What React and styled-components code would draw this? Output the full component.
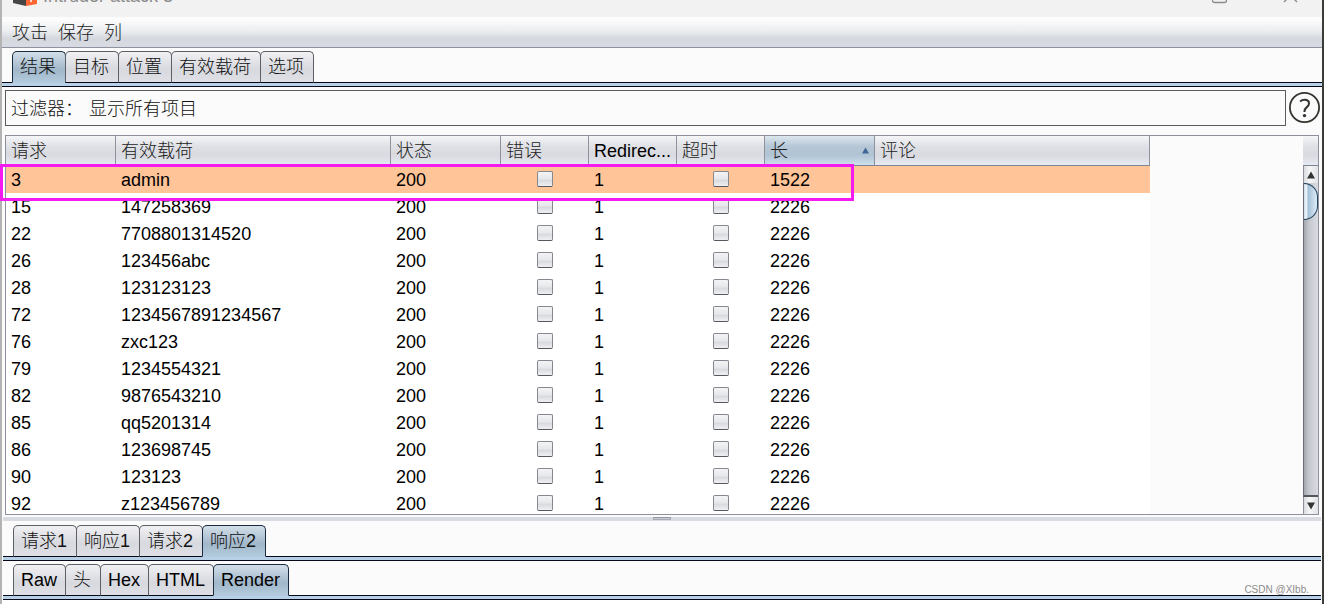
import React from 'react';
import styled, { createGlobalStyle } from 'styled-components';

const Global = createGlobalStyle`
  * { box-sizing: border-box; }
  body {
    margin: 0;
    overflow: hidden;
    background: #fbfbfb;
    color: #000;
    font: 18px/26px "Liberation Sans", "Noto Sans CJK SC", sans-serif;
  }
  button { font: inherit; color: inherit; }
`;

const Window = styled.div`
  display: flex;
  flex-direction: column;
  height: 100vh;
  border-left: 2px solid #b3b3b3;
  border-right: 2px solid #3b3b38;
`;

const TitleBar = styled.header`
  display: flex;
  align-items: flex-end;
  justify-content: space-between;
  flex: none;
  height: 17px;
  padding: 0 24px 0 11px;
  background: #f2f2f2;
  overflow: hidden;
`;

const TitleGroup = styled.div`
  display: flex;
  align-items: center;
  gap: ${(p) => p.$gap};
  height: 42px;
  color: #8c8c8c;
  white-space: nowrap;
`;

const MenuBar = styled.nav`
  display: flex;
  align-items: center;
  gap: 10px;
  flex: none;
  height: 31px;
  padding: 2px 10px 0;
  background: linear-gradient(#fcfcfc 10%, #eceef1 45%, #d5d8de 72%, #d8dbe1);
  border-bottom: 1px solid #9092a1;
`;

const MenuItem = styled.button`
  padding: 0;
  border: 0;
  background: none;
  color: #222;
  font-weight: 300;
`;

const TabPanel = styled.div`
  flex: none;
  padding-top: 3px;
  margin: ${(p) => (p.$inset ? '0 1px' : '0')};
`;

const TabList = styled.div`
  display: flex;
  position: relative;
  padding-left: 10px;
`;

const Tab = styled.button`
  height: 32px;
  margin: 0 -1px -1px 0;
  padding: ${(p) => (p.$latin ? '0 8px 0 7px' : '0 9px 0 7px')};
  border: 1px solid ${(p) => (p.$active ? '#1b2b3f' : '#5d5f68')};
  border-bottom-color: ${(p) => (p.$active ? '#b3cbe0' : '#05071a')};
  border-radius: 5px 5px 0 0;
  background: ${(p) =>
    p.$active
      ? 'linear-gradient(#d3dfe9, #b1c4d4 40%, #a1b7ca 60%, #b3c9dc)'
      : 'linear-gradient(#f1f1f4, #dfe0e5 40%, #d8d9df 60%, #dfe0e6)'};
  color: ${(p) => (p.$latin ? '#000' : '#111')};
  font-weight: 300;
  line-height: 30px;
  white-space: nowrap;
`;

const Band = styled.div`
  height: 5px;
  background: #b8d0e5;
  border: solid #05071a;
  border-width: 1px 0;
`;

const FilterRow = styled.div`
  display: flex;
  align-items: center;
  gap: 3px;
  flex: none;
  padding: 3px 2px 9px 3px;
`;

const FilterButton = styled.button`
  display: flex;
  align-items: center;
  gap: 6px;
  flex: 1;
  height: 36px;
  padding: 2px 5px 0;
  border: 1px solid #5c5c5c;
  background: #fbfbfb;
  color: #111;
  font-weight: 300;
`;

const HelpButton = styled.button`
  display: flex;
  padding: 0;
  border: 0;
  background: none;
`;

const ResultsArea = styled.main`
  position: relative;
  display: flex;
  flex: 1;
  min-height: 0;
  margin: 0 3px;
  border: 1px solid #8e90a0;
`;

const Viewport = styled.div`
  flex: 1;
  min-width: 0;
  overflow: hidden;
`;

const Grid = styled.table`
  width: 1144px;
  table-layout: fixed;
  border-collapse: separate;
  border-spacing: 0;
`;

const HeadCell = styled.th`
  height: 30px;
  padding: 0 5px;
  white-space: nowrap;
  text-align: left;
  font-weight: 300;
  color: ${(p) => (p.$latin ? '#000' : '#222')};
  border-right: 1px solid #8f919c;
  border-bottom: 1px solid #7e8494;
  background: ${(p) =>
    p.$sorted
      ? 'linear-gradient(#dce6ee, #b6c8d7 35%, #b0c3d3 65%, #cddfec)'
      : 'linear-gradient(#f6f6f8, #dfe1e6 35%, #d8dae0 65%, #e6eaf2)'};
`;

const HeadLabel = styled.span`
  display: flex;
  align-items: center;
  justify-content: space-between;
`;

const Row = styled.tr`
  background: ${(p) => (p.$selected ? '#ffc498' : '#fff')};
`;

const Cell = styled.td`
  height: 27px;
  padding: ${(p) => (p.$center ? '0 5px 2px' : '0 5px')};
  white-space: nowrap;
`;

const Check = styled.input`
  appearance: none;
  display: block;
  width: 16px;
  height: 16px;
  margin: 0 auto;
  border: 1px solid #85888f;
  border-bottom-color: #55585f;
  border-radius: 2px;
  background: linear-gradient(#f4f4f6, #e6e7ea 50%, #d9dadf 60%, #f0f0f3);
`;

const ScrollColumn = styled.div`
  display: flex;
  flex-direction: column;
  flex: none;
  width: 15px;
`;

const ScrollCorner = styled.div`
  flex: none;
  height: 30px;
  border-bottom: 1px solid #7e8494;
  background: linear-gradient(#f6f6f8, #dfe1e6 35%, #d8dae0 65%, #e6eaf2);
`;

const ScrollArrow = styled.button`
  display: flex;
  align-items: center;
  justify-content: center;
  flex: none;
  height: 17px;
  padding: 0;
  border: 0;
  border-left: 1px solid #8e909c;
  background: linear-gradient(90deg, #d9dbdf, #f7f7f7 40%, #dfe3e5);
`;

const ScrollTrack = styled.div`
  flex: 1;
  min-height: 0;
  border-left: 1px solid #6b6d76;
  border-bottom: 2px solid #55575c;
  background: linear-gradient(90deg, #a4a6b0, #c6c8d0 35%, #dadbe1);
`;

const ScrollThumb = styled.div`
  height: 37px;
  border: 1px solid #24425a;
  border-left: 0;
  border-radius: 0 14px 14px 0;
  background: linear-gradient(90deg, #cbdbe8, #f2f8fc 18%, #a4bfd5 32%, #c0d6e8 65%, #dcecf7);
`;

const Annotation = styled.div`
  position: absolute;
  top: 28px;
  left: -6px;
  width: 854px;
  height: 37px;
  border: 3px solid #f51af0;
  pointer-events: none;
`;

const Splitter = styled.div`
  display: flex;
  justify-content: center;
  flex: none;
  height: 4px;
  margin: 2px 1px 1px;
  background: #d9dbe3;
`;

const SplitHandle = styled.span`
  width: 18px;
  height: 3px;
  border: 1px solid #a9abb7;
  border-top-color: #9496a3;
  background: #c9cbd4;
`;

const RenderPane = styled.footer`
  flex: none;
  height: 4px;
  background: #fff;
`;

const Watermark = styled.div`
  position: absolute;
  right: 15px;
  bottom: 6px;
  font-size: 10px;
  line-height: 16px;
  color: #8b8b8b;
`;

const columns = [
  { label: '请求', width: 110 },
  { label: '有效载荷', width: 275 },
  { label: '状态', width: 110 },
  { label: '错误', width: 88 },
  { label: 'Redirec...', width: 88, latin: true },
  { label: '超时', width: 88 },
  { label: '长', width: 110, sorted: true },
  { label: '评论', width: 275 },
];

const results = [
  ['3', 'admin', '1522'],
  ['15', '147258369', '2226'],
  ['22', '7708801314520', '2226'],
  ['26', '123456abc', '2226'],
  ['28', '123123123', '2226'],
  ['72', '1234567891234567', '2226'],
  ['76', 'zxc123', '2226'],
  ['79', '1234554321', '2226'],
  ['82', '9876543210', '2226'],
  ['85', 'qq5201314', '2226'],
  ['86', '123698745', '2226'],
  ['90', '123123', '2226'],
  ['92', 'z123456789', '2226'],
];

function Triangle({ down, size = 8, color = '#333' }) {
  return (
    <svg width={size} height={size} viewBox="0 0 8 8" aria-hidden="true">
      <path d={down ? 'M0 0.5h8L4 7.5z' : 'M0 7.5h8L4 0.5z'} fill={color} />
    </svg>
  );
}

function Tabs({ items, active, inset }) {
  return (
    <TabPanel $inset={inset}>
      <TabList role="tablist">
        {items.map((t) => (
          <Tab
            key={t}
            role="tab"
            aria-selected={t === active}
            $active={t === active}
            $latin={/^[A-Z]/i.test(t)}
          >
            {t}
          </Tab>
        ))}
      </TabList>
      <Band />
    </TabPanel>
  );
}

export default function App() {
  return (
    <>
      <Global />
      <Window>
        <TitleBar>
          <TitleGroup $gap="6px">
            <svg width="24" height="20" viewBox="0 0 24 20" aria-hidden="true">
              <path d="M0 0h13v20L0 17z" fill="#454545" />
              <path d="M13 0h11v18l-11 2z" fill="#ff6633" />
              <path d="M18 8v8" stroke="#fff" strokeWidth="1.5" />
            </svg>
            <span>Intruder attack 3</span>
          </TitleGroup>
          <TitleGroup $gap="56px">
            <svg width="15" height="15" viewBox="0 0 15 15" fill="none" stroke="#8c8c8c" aria-hidden="true">
              <rect x="0.5" y="0.5" width="14" height="13" rx="2" strokeWidth="1.4" />
            </svg>
            <svg width="15" height="14" viewBox="0 0 15 14" fill="none" stroke="#8c8c8c" aria-hidden="true">
              <path d="M1 0l13 13M14 0L1 13" strokeWidth="1.4" />
            </svg>
          </TitleGroup>
        </TitleBar>
        <MenuBar>
          <MenuItem>攻击</MenuItem>
          <MenuItem>保存</MenuItem>
          <MenuItem>列</MenuItem>
        </MenuBar>
        <Tabs items={['结果', '目标', '位置', '有效载荷', '选项']} active="结果" />
        <FilterRow>
          <FilterButton>
            <span>过滤器：</span>
            <span>显示所有项目</span>
          </FilterButton>
          <HelpButton aria-label="Help">
            <svg width="31" height="32" viewBox="0 0 31 32" fill="none" stroke="#33332f" aria-hidden="true">
              <circle cx="15.5" cy="15.500" r="14.600" strokeWidth="1.800" />
              <path
                d="M11.100 9.400c1.200-1 2.700-1.600 4.500-1.600 2.700 0 4.400 1.400 4.400 3.600 0 1.800-.9 2.800-2.400 4-1.500 1.200-2.100 2-2.100 3.900v.6"
                strokeWidth="2"
              />
              <circle cx="15.500" cy="23.600" r="1.700" fill="#33332f" stroke="none" />
            </svg>
          </HelpButton>
        </FilterRow>
        <ResultsArea>
          <Viewport>
            <Grid>
              <colgroup>
                {columns.map((c) => (
                  <col key={c.label} width={c.width} />
                ))}
              </colgroup>
              <thead>
                <tr>
                  {columns.map((c) => (
                    <HeadCell key={c.label} $sorted={c.sorted} $latin={c.latin}>
                      {c.sorted ? (
                        <HeadLabel>
                          {c.label}
                          <Triangle size={7} color="#3f6795" />
                        </HeadLabel>
                      ) : (
                        c.label
                      )}
                    </HeadCell>
                  ))}
                </tr>
              </thead>
              <tbody>
                {results.map(([id, payload, length], i) => (
                  <Row key={id} $selected={i === 0}>
                    <Cell>{id}</Cell>
                    <Cell>{payload}</Cell>
                    <Cell>200</Cell>
                    <Cell $center>
                      <Check type="checkbox" aria-label={`错误 ${id}`} />
                    </Cell>
                    <Cell>1</Cell>
                    <Cell $center>
                      <Check type="checkbox" aria-label={`超时 ${id}`} />
                    </Cell>
                    <Cell>{length}</Cell>
                    <Cell />
                  </Row>
                ))}
              </tbody>
            </Grid>
          </Viewport>
          <ScrollColumn>
            <ScrollCorner />
            <ScrollArrow aria-label="Scroll up">
              <Triangle />
            </ScrollArrow>
            <ScrollTrack>
              <ScrollThumb />
            </ScrollTrack>
            <ScrollArrow aria-label="Scroll down">
              <Triangle down />
            </ScrollArrow>
          </ScrollColumn>
          <Annotation />
        </ResultsArea>
        <Splitter>
          <SplitHandle />
        </Splitter>
        <Tabs items={['请求1', '响应1', '请求2', '响应2']} active="响应2" inset />
        <Tabs items={['Raw', '头', 'Hex', 'HTML', 'Render']} active="Render" inset />
        <RenderPane />
        <Watermark>CSDN @XIbb.</Watermark>
      </Window>
    </>
  );
}
